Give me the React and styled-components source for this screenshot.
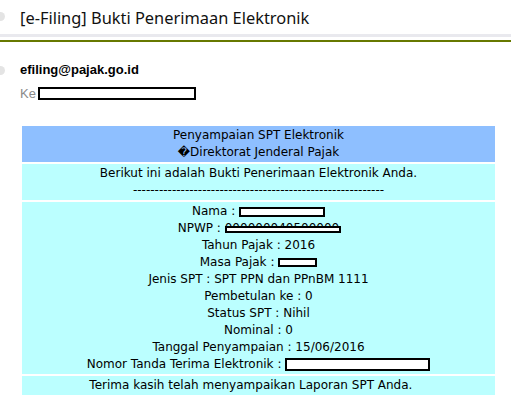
import React from "react";
import styled, { createGlobalStyle } from "styled-components";

const Global = createGlobalStyle`
  html, body { margin: 0; padding: 0; background: #fff; }
  body { font-family: "DejaVu Sans", sans-serif; }
`;

const Page = styled.div`
  width: 511px;
  height: 404px;
  overflow: hidden;
  background: #fff;
`;

const Header = styled.div`
  height: 34px;
  display: flex;
  align-items: center;
  position: relative;
`;

const Dot = styled.span`
  position: absolute;
  left: -4px;
  top: ${(p) => p.$top}px;
  width: 9px;
  height: 9px;
  border-radius: 50%;
  background: #e4e4e4;
`;

const Title = styled.h1`
  margin: 0 0 0 20px;
  font-family: "Noto Sans", sans-serif;
  font-weight: 400;
  font-size: 16.4px;
  color: #111;
  line-height: 22px;
  padding-top: 1px;
`;

const GrayBand = styled.div`
  height: 3px;
  background: #e9e9ee;
`;

const OliveRule = styled.div`
  height: 2px;
  margin-top: 3px;
  background: #677900;
`;

const Sender = styled.div`
  position: relative;
  padding: 20px 0 0 20px;
`;

const From = styled.div`
  font-family: "Liberation Sans", sans-serif;
  font-weight: 700;
  font-size: 13px;
  line-height: 16px;
  color: #000;
`;

const To = styled.div`
  margin-top: 8px;
  font-family: "Liberation Sans", sans-serif;
  font-size: 13px;
  line-height: 15px;
  color: #8a8a8a;
  display: flex;
  align-items: center;
`;

const Redact = styled.span`
  display: inline-block;
  box-sizing: border-box;
  width: ${(p) => p.$w}px;
  height: ${(p) => p.$h}px;
  border: 2px solid #000;
  background: #fff;
  vertical-align: middle;
`;

const Table = styled.div`
  margin: 25px 0 0 22px;
  width: 473px;
  display: flex;
  flex-direction: column;
  gap: 2px;
  font-family: "DejaVu Sans", sans-serif;
  font-size: 12px;
  color: #000;
`;

const Cell = styled.div`
  background: ${(p) => (p.$head ? "#8ebfff" : "#bbffff")};
  padding: 1px 0;
  text-align: center;
  line-height: 17px;
`;

const Line = styled.div`
  white-space: pre;
`;

const Masked = styled.span`
  position: relative;
  display: inline-block;
  vertical-align: top;
`;

const MaskBox = styled.span`
  position: absolute;
  box-sizing: border-box;
  left: ${(p) => p.$l}px;
  top: ${(p) => p.$t}px;
  width: ${(p) => p.$w}px;
  height: ${(p) => p.$h}px;
  border: 2px solid #000;
  background: #fff;
`;

export default function App() {
  return (
    <Page>
      <Global />
      <Header>
        <Dot $top={12} />
        <Title>[e-Filing] Bukti Penerimaan Elektronik</Title>
      </Header>
      <GrayBand />
      <OliveRule />
      <Sender>
        <Dot $top={24} />
        <From>efiling@pajak.go.id</From>
        <To>
          Ke
          <Redact $w={158} $h={13} style={{ marginLeft: 2 }} />
        </To>
      </Sender>
      <Table>
        <Cell $head>
          <Line>Penyampaian SPT Elektronik</Line>
          <Line>{"\uFFFD"}Direktorat Jenderal Pajak</Line>
        </Cell>
        <Cell>
          <Line>Berikut ini adalah Bukti Penerimaan Elektronik Anda.</Line>
          <Line>{"-".repeat(58)}</Line>
        </Cell>
        <Cell>
          <Line>
            Nama : <Redact $w={86} $h={10} />
          </Line>
          <Line>
            {"NPWP : "}
            <Masked>
              000000040500000
              <MaskBox $l={0} $t={6} $w={116} $h={7} />
            </Masked>
          </Line>
          <Line>Tahun Pajak : 2016</Line>
          <Line>
            Masa Pajak : <Redact $w={39} $h={9} />
          </Line>
          <Line>Jenis SPT : SPT PPN dan PPnBM 1111</Line>
          <Line>Pembetulan ke : 0</Line>
          <Line>Status SPT : Nihil</Line>
          <Line>Nominal : 0</Line>
          <Line>Tanggal Penyampaian : 15/06/2016</Line>
          <Line>
            Nomor Tanda Terima Elektronik : <Redact $w={145} $h={13} />
          </Line>
        </Cell>
        <Cell>
          <Line>{"Terima kasih telah menyampaikan Laporan SPT Anda.    "}</Line>
        </Cell>
      </Table>
    </Page>
  );
}
